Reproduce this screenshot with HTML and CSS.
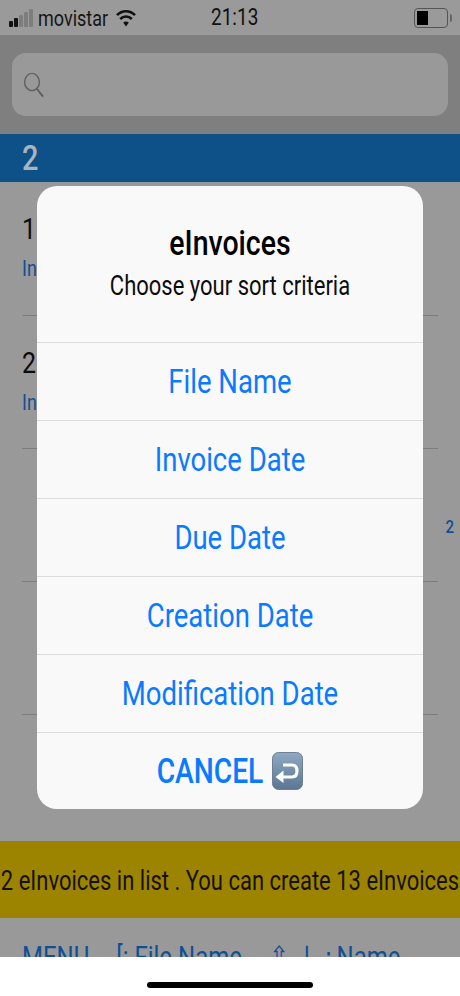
FILE: index.html
```html
<!DOCTYPE html>
<html lang="en">
<head>
<meta charset="utf-8">
<title>eInvoices</title>
<link rel="stylesheet" href="styles.css">
</head>
<body>
<div class="screen">
  <div class="status">
    <div class="status-left">
      <svg class="signal" width="24" height="18" viewBox="0 0 24 18"><rect x="0" y="12" width="4" height="6" rx="1" fill="#111"/><rect x="5" y="9" width="4" height="9" rx="1" fill="#111"/><rect x="10" y="6" width="4" height="12" rx="1" fill="#7d7d7d"/><rect x="15" y="3" width="4" height="15" rx="1" fill="#7d7d7d"/><rect x="20" y="0" width="4" height="18" rx="1" fill="#7d7d7d"/></svg>
      <span class="tall carrier">movistar</span>
      <svg class="wifi" width="20" height="18" viewBox="0 0 20 18"><path d="M1 6.200C6 1 14 1 19 6.200" fill="none" stroke="#111" stroke-width="2.600"/><path d="M4.200 10C7.600 6.600 12.400 6.600 15.800 10" fill="none" stroke="#111" stroke-width="2.600"/><path d="M7.200 13.600C8.800 12 11.200 12 12.800 13.600L10 17.400Z" fill="#111"/></svg>
    </div>
    <span class="tall clock">21:13</span>
    <div class="battery"><div class="battery-body"><div class="battery-fill"></div></div><div class="battery-cap"></div></div>
  </div>
  <div class="search-area">
    <div class="search-field">
      <svg width="21" height="26" viewBox="0 0 21 26"><ellipse cx="9" cy="10" rx="7.400" ry="8.600" fill="none" stroke="#5f5f5f" stroke-width="1.400"/><path d="M14 17L20 24.600" stroke="#5f5f5f" stroke-width="2" fill="none"/></svg>
    </div>
  </div>
  <div class="section-bar"><span class="tall section-num">2</span></div>
  <div class="list">
    <div class="row first"><span class="tall row-title">12</span><span class="tall row-sub">Invoice</span></div>
    <div class="row"><span class="tall row-title">2</span><span class="tall row-sub">Invoice</span></div>
    <div class="row row-badge"><span class="tall badge">2</span></div>
    <div class="row"></div>
  </div>
  <div class="notice"><span class="tall notice-text">2 eInvoices in list . You can create 13 eInvoices</span></div>
  <div class="menu-wrap">
    <div class="menu"><span class="tall">MENU</span><span class="tall">[: File Name</span><span class="tall arrows">⇧ ↓ :</span><span class="tall menu-last">Name</span></div>
  </div>
  <div class="home-area"><div class="home-bar"></div></div>

  <div class="alert">
    <div class="alert-head">
      <span class="tall alert-title">eInvoices</span>
      <span class="tall alert-msg">Choose your sort criteria</span>
    </div>
    <div class="alert-btn"><span class="tall">File Name</span></div>
    <div class="alert-btn"><span class="tall">Invoice Date</span></div>
    <div class="alert-btn"><span class="tall">Due Date</span></div>
    <div class="alert-btn"><span class="tall">Creation Date</span></div>
    <div class="alert-btn"><span class="tall">Modification Date</span></div>
    <div class="alert-btn cancel">
      <span class="tall">CANCEL</span>
      <svg width="31" height="38" viewBox="0 0 31 38"><defs><linearGradient id="g" x1="0" y1="0" x2="0" y2="1"><stop offset="0" stop-color="#8fa9c4"/><stop offset="1" stop-color="#5a7693"/></linearGradient></defs><rect x="0.500" y="0.500" width="30" height="37" rx="6" fill="url(#g)" stroke="#6d7f92"/><path d="M11 13H20C23.600 13 25 15.600 25 19C25 22.400 23.600 25 20 25H10" fill="none" stroke="#fff" stroke-width="3.200"/><path d="M11.500 18.500V31L3.500 25Z" fill="#fff"/></svg>
    </div>
  </div>
</div>
</body>
</html>
```
FILE: styles.css
```css
* { box-sizing: border-box; }
html, body { margin: 0; padding: 0; }
body { font-family: Roboto, "Liberation Sans", sans-serif; background: #fff; }
.screen { position: relative; width: 460px; height: 996px; overflow: hidden; background: #999; display: flex; flex-direction: column; }
.tall { display: inline-block; transform: scaleY(1.217); white-space: nowrap; }

.status { height: 35px; flex: none; display: flex; align-items: center; padding: 1px 0 0 9px; background: #9a9a9a; position: relative; }
.status-left { display: flex; align-items: center; }
.carrier { font-size: 18px; color: #161616; margin-left: 5px; }
.wifi { margin-left: 8px; }
.clock { position: absolute; left: 211px; top: 6px; font-size: 19px; color: #111; }
.battery { position: absolute; left: 414px; top: 8px; display: flex; align-items: center; }
.battery-body { width: 34px; height: 20px; border: 1.5px solid #555; border-radius: 4px; padding: 2px; }
.battery-fill { width: 11px; height: 100%; background: #000; }
.battery-cap { width: 2px; height: 8px; background: #666; margin-left: 2px; border-radius: 0 2px 2px 0; }

.search-area { height: 99px; flex: none; background: #7f7f7f; padding: 18px 12px 0; }
.search-field { height: 63px; background: #999; border-radius: 14px; padding: 19px 0 0 11px; display: flex; }

.section-bar { height: 48px; flex: none; background: #0e5088; padding-left: 22px; display: flex; align-items: center; }
.section-num { font-size: 29px; font-weight: 500; color: #a9b4bf; }

.list { height: 659px; flex: none; padding: 0 22px; }
.row { height: 133px; border-bottom: 1px solid #7d7d7d; display: flex; flex-direction: column; padding-top: 32px; position: relative; }
.row.first { height: 134px; }
.row-title { font-size: 25px; color: #0c0c0c; }
.row-sub { font-size: 18px; color: #114f94; margin-top: 15px; }
.row-badge { align-items: flex-end; }
.badge { font-size: 15px; font-weight: 500; color: #124f96; margin: 37px -16px 0 0; }

.notice { height: 77px; flex: none; background: #9c8400; display: flex; align-items: center; justify-content: center; padding-top: 1px; }
.notice-text { font-size: 22px; color: #151100; }

.menu-wrap { height: 39px; flex: none; padding: 24px 0 0 22px; overflow: hidden; }
.menu { display: flex; gap: 27px; font-size: 24px; color: #114f94; line-height: 30px; }
.arrows { font-family: "DejaVu Sans", Roboto, sans-serif; font-size: 24px; }
.menu-last { margin-left: -23px; }

.home-area { flex: 1; background: #fff; display: flex; justify-content: center; padding-top: 25px; }
.home-bar { width: 166px; height: 6px; background: #000; border-radius: 3px; }

.alert { position: absolute; left: 37px; top: 186px; width: 386px; background: #f9f9f9; border-radius: 20px; overflow: hidden; display: flex; flex-direction: column; }
.alert-head { height: 156px; display: flex; flex-direction: column; align-items: center; padding-top: 42px; }
.alert-title { font-size: 28.500px; font-weight: 500; color: #000; line-height: 32px; }
.alert-msg { font-size: 22px; color: #0c0c0c; margin-top: 13px; line-height: 26px; }
.alert-btn { height: 78px; border-top: 1px solid #dcdcdc; display: flex; align-items: center; justify-content: center; font-size: 27.500px; color: #0a7aff; }
.cancel { font-size: 28.200px; font-weight: 500; gap: 9px; height: 77px; }
```
